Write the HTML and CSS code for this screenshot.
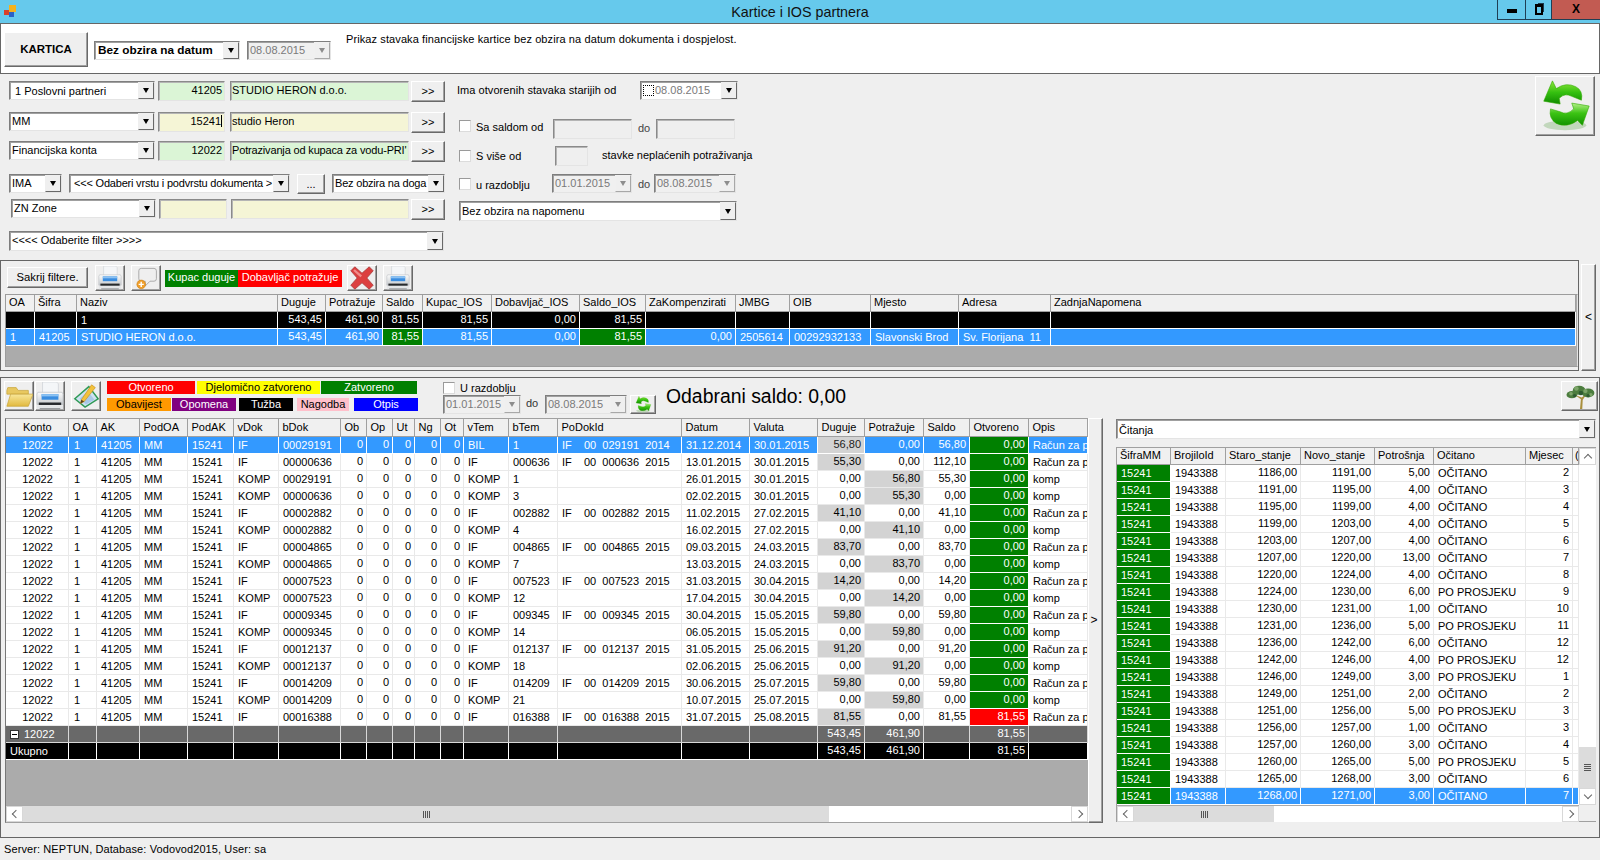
FILE: index.html
```html
<!DOCTYPE html>
<html lang="hr">
<head>
<meta charset="utf-8">
<title>Kartice i IOS partnera</title>
<link rel="stylesheet" href="styles.css">
</head>
<body>
<svg class="defs" aria-hidden="true">
  <defs>
    <linearGradient id="grn" x1="0" y1="0" x2="0" y2="1"><stop offset="0" stop-color="#8fe63a"/><stop offset="0.5" stop-color="#35c010"/><stop offset="1" stop-color="#0f8a00"/></linearGradient>
    <linearGradient id="grn2" x1="0" y1="0" x2="0" y2="1"><stop offset="0" stop-color="#b5f08a"/><stop offset="0.45" stop-color="#3cc414"/><stop offset="1" stop-color="#129200"/></linearGradient>
    <linearGradient id="pbody" x1="0" y1="0" x2="0" y2="1"><stop offset="0" stop-color="#fbfbfb"/><stop offset="1" stop-color="#c8ccd0"/></linearGradient>
    <linearGradient id="fold" x1="0" y1="0" x2="0" y2="1"><stop offset="0" stop-color="#f8e79a"/><stop offset="1" stop-color="#e2b93e"/></linearGradient>
    <symbol id="i-print" viewBox="0 0 30 30">
      <path d="M7 0h15l2 2v11H7z" fill="#f4f6f8" stroke="#c9ced3" stroke-width=".7"/>
      <path d="M2 11h26l1 2v11H1V13z" fill="url(#pbody)" stroke="#b9bdc2" stroke-width=".7"/>
      <rect x="6" y="13" width="18" height="6" fill="#3a8de0"/>
      <rect x="6" y="13" width="18" height="2.4" fill="#8cc2f2"/>
      <rect x="3" y="22" width="24" height="2.6" fill="#26292c"/>
      <rect x="1" y="25" width="28" height="4" fill="#e4e6e8"/>
      <rect x="4" y="28" width="22" height="1.2" fill="#8d9094"/>
    </symbol>
    <symbol id="i-refresh" viewBox="0 0 60 60">
      <ellipse cx="30" cy="50" rx="22" ry="5" fill="#a9c9a0" opacity=".65"/>
      <path d="M17 4 8 25 25 28 24 22Q30 16 37 20L47 24Q49 14 41 10 31 5 21 12Z" fill="url(#grn)" stroke="#2fa800" stroke-width=".6"/>
      <path d="M48 50 55 30 37 27 39 33Q32 40 25 36L15 33Q13 43 21 48 32 53 43 45Z" fill="url(#grn2)" stroke="#2fa800" stroke-width=".6"/>
    </symbol>
  </defs>
</svg>

<header class="titlebar">
  <div class="title-left">
    <svg class="appicon" viewBox="0 0 12 12"><rect x="0" y="5" width="5" height="5" fill="#d8402a"/><rect x="5" y="0" width="7" height="7" fill="#f5b21c"/><rect x="5" y="7" width="5" height="5" fill="#2a62c8"/></svg>
  </div>
  <div class="title-text">Kartice i IOS partnera</div>
  <div class="winbtns">
    <div class="winbtn w-min"><span class="min-glyph"></span></div>
    <div class="winbtn w-res"><span class="res-glyph"></span></div>
    <div class="winbtn w-close">X</div>
  </div>
</header>

<section class="toppanel">
  <button class="btn3d kartica">KARTICA</button>
  <div class="combo bold cb-mode"><span class="ctext">Bez obzira na datum</span><span class="arr"></span></div>
  <div class="combo dis cb-date0"><span class="ctext">08.08.2015</span><span class="arr"></span></div>
  <div class="topnote">Prikaz stavaka financijske kartice bez obzira na datum dokumenta i dospjelost.</div>
</section>

<section class="filters">
  <div class="fleft">
    <div class="frow">
      <div class="combo w-a"><span class="ctext ind1">1 Poslovni partneri</span><span class="arr"></span></div>
      <div class="inp green w-code n-in">41205</div>
      <div class="inp green w-name">STUDIO HERON d.o.o.</div>
      <button class="btn3d w-go">&gt;&gt;</button>
    </div>
    <div class="frow">
      <div class="combo w-a"><span class="ctext">MM</span><span class="arr"></span></div>
      <div class="inp yellow w-code n-in"><span class="caret">15241</span></div>
      <div class="inp yellow w-name">studio Heron</div>
      <button class="btn3d w-go">&gt;&gt;</button>
    </div>
    <div class="frow">
      <div class="combo w-a"><span class="ctext">Financijska konta</span><span class="arr"></span></div>
      <div class="inp green w-code n-in">12022</div>
      <div class="inp green w-name tight">Potrazivanja od kupaca za vodu-PRI'</div>
      <button class="btn3d w-go">&gt;&gt;</button>
    </div>
    <div class="frow row4">
      <div class="combo w-ima"><span class="ctext">IMA</span><span class="arr"></span></div>
      <div class="combo w-vrsta"><span class="ctext ind tight2">&lt;&lt;&lt; Odaberi vrstu i podvrstu dokumenta &gt;</span><span class="arr"></span></div>
      <button class="btn3d w-dots">...</button>
      <div class="combo w-doga"><span class="ctext tight2">Bez obzira na doga</span><span class="arr"></span></div>
    </div>
    <div class="frow row5">
      <div class="combo w-zn"><span class="ctext">ZN Zone</span><span class="arr"></span></div>
      <div class="inp yellow w-code2"></div>
      <div class="inp yellow w-name2"></div>
      <button class="btn3d w-go">&gt;&gt;</button>
    </div>
    <div class="frow">
      <div class="combo w-filter"><span class="ctext ind0">&lt;&lt;&lt;&lt; Odaberite filter &gt;&gt;&gt;&gt;</span><span class="arr"></span></div>
    </div>
  </div>
  <div class="fright">
    <div class="rrow r-ima">
      <span class="lab-ima">Ima otvorenih stavaka starijih od</span>
      <div class="combo date-cb"><span class="focuscb"></span><span class="ctext grey">08.08.2015</span><span class="arr"></span></div>
    </div>
    <div class="rrow r-saldo">
      <span class="chk"></span><span class="lab-c">Sa saldom od</span>
      <div class="inp off w-sal"></div><span class="lab-do">do</span><div class="inp off w-sal2"></div>
    </div>
    <div class="rrow r-vise">
      <span class="chk"></span><span class="lab-c lab-c2">S više od</span>
      <div class="inp off w-vise"></div><span class="lab-stavke">stavke neplaćenih potraživanja</span>
    </div>
    <div class="rrow r-razd">
      <span class="chk"></span><span class="lab-c lab-c3">u razdoblju</span>
      <div class="combo dis w-d1"><span class="ctext">01.01.2015</span><span class="arr"></span></div><span class="lab-do2">do</span>
      <div class="combo dis w-d2"><span class="ctext">08.08.2015</span><span class="arr"></span></div>
    </div>
    <div class="rrow r-nap">
      <div class="combo w-nap"><span class="ctext t3">Bez obzira na napomenu</span><span class="arr"></span></div>
    </div>
  </div>
  <button class="btn3d big-refresh"><svg class="ic-big" viewBox="0 0 60 60"><use href="#i-refresh"/></svg></button>
</section>

<section class="mid">
  <div class="panel2">
    <div class="toolbar2">
      <button class="btn3d sakrij">Sakrij filtere.</button>
      <button class="btn3d ib ib-a"><svg class="ic" viewBox="0 0 30 30"><use href="#i-print"/></svg></button>
      <button class="btn3d ib ib-b"><svg class="ic" viewBox="0 0 30 30"><path d="M9 3h16a3 3 0 0 1 3 3v10a3 3 0 0 1-3 3h-5l-6 6v-6H9a3 3 0 0 1-3-3V6a3 3 0 0 1 3-3z" fill="#efefef" stroke="#a8a8a8" stroke-width="1.2"/><circle cx="9" cy="23" r="5.4" fill="#f0a02c" stroke="#c97c12" stroke-width=".7"/><path d="M9 19.8v6.4M5.8 23h6.4" stroke="#fff" stroke-width="1.8"/></svg></button>
      <div class="leg2 l-green">Kupac duguje</div>
      <div class="leg2 l-red">Dobavljač potražuje</div>
      <button class="btn3d ib ib-x"><svg class="ic" viewBox="0 0 30 30"><path d="M1 6l5-5 9 8 9-8 5 5-8 9 8 9-5 5-9-8-9 8-5-5 8-9z" fill="#dc3f3f" stroke="#a93a3a" stroke-width="1"/><path d="M4 6l2-2 9 8-2 2z" fill="#f08c8a"/></svg></button>
      <button class="btn3d ib ib-p2"><svg class="ic" viewBox="0 0 30 30"><use href="#i-print"/></svg></button>
    </div>
    <div class="grid-top">
      <table class="dg dg-top">
        <thead><tr><th>OA</th><th>Šifra</th><th>Naziv</th><th>Duguje</th><th>Potražuje</th><th>Saldo</th><th>Kupac_IOS</th><th>Dobavljač_IOS</th><th>Saldo_IOS</th><th>ZaKompenzirati</th><th>JMBG</th><th>OIB</th><th>Mjesto</th><th>Adresa</th><th>ZadnjaNapomena</th></tr></thead>
        <tbody>
          <tr class="tot"><td></td><td></td><td>1</td><td class="n">543,45</td><td class="n">461,90</td><td class="n">81,55</td><td class="n">81,55</td><td class="n">0,00</td><td class="n">81,55</td><td></td><td></td><td></td><td></td><td></td><td></td></tr>
          <tr class="sel"><td>1</td><td>41205</td><td>STUDIO HERON d.o.o.</td><td class="n">543,45</td><td class="n">461,90</td><td class="n ok">81,55</td><td class="n">81,55</td><td class="n">0,00</td><td class="n ok">81,55</td><td class="n">0,00</td><td>2505614</td><td>00292932133</td><td>Slavonski Brod</td><td class="pre">Sv. Florijana  11</td><td></td></tr>
        </tbody>
      </table>
    </div>
  </div>
  <button class="btn3d side-left">&lt;</button>
</section>

<section class="panel3">
  <div class="toolbar3">
    <button class="btn3d ib3 ib3-a"><svg class="ic3" viewBox="0 0 30 30"><path d="M2 9l1-3h9l2 3h11v4H2z" fill="#e8c860" stroke="#c9a63c" stroke-width=".8"/><path d="M6 13h24l-5 13H2z" fill="url(#fold)" stroke="#c9a63c" stroke-width=".8"/></svg></button>
    <button class="btn3d ib3 ib3-b"><svg class="ic3" viewBox="0 0 30 30"><use href="#i-print"/></svg></button>
    <button class="btn3d ib3 ib3-c"><svg class="ic3" viewBox="0 0 30 30"><path d="M3 18 18 5l10 13-14 9z" fill="#cfe2f2" stroke="#2f9a56" stroke-width="1.6"/><path d="M8 18l9-8 7 9-9 5z" fill="#a9c8e8"/><path d="M10 19 21 3l4 3-12 15-4 2z" fill="#f2c23c" stroke="#c98f1a" stroke-width=".7"/><path d="M9 23l1-4 3 2z" fill="#5a3d1a"/></svg></button>
    <div class="legends">
      <div class="legrow">
        <div class="leg lg-red w-l1">Otvoreno</div><div class="leg lg-yel w-l2">Djelomično zatvoreno</div><div class="leg lg-grn w-l3">Zatvoreno</div>
      </div>
      <div class="legrow legrow2">
        <div class="leg lg-org w-l4">Obavijest</div><div class="leg lg-pur w-l5">Opomena</div><div class="leg lg-blk w-l6">Tužba</div><div class="leg lg-pnk w-l7">Nagodba</div><div class="leg lg-blu w-l8">Otpis</div>
      </div>
    </div>
    <div class="razd">
      <div class="razd-top"><span class="chk"></span><span class="razd-lab">U razdoblju</span></div>
      <div class="razd-bot">
        <div class="combo dis w-r1"><span class="ctext">01.01.2015</span><span class="arr"></span></div><span class="razd-do">do</span>
        <div class="combo dis w-r2"><span class="ctext">08.08.2015</span><span class="arr"></span></div>
        <button class="btn3d ref-small"><svg class="ic-small" viewBox="0 0 60 60"><use href="#i-refresh"/></svg></button>
      </div>
    </div>
    <div class="saldo">Odabrani saldo: 0,00</div>
    <button class="btn3d tree"><svg class="ic-tree" viewBox="0 0 36 30"><path d="M18 29l1-11-7-5 8 3 6-5-5 8-.5 10z" fill="#a98f3c"/><g fill="#4c7d3e"><ellipse cx="9" cy="13" rx="6" ry="4"/><ellipse cx="17" cy="8" rx="7" ry="5"/><ellipse cx="27" cy="11" rx="7" ry="5"/></g><g fill="#7da56a"><circle cx="14" cy="6" r="2.5"/><circle cx="24" cy="9" r="2.4"/><circle cx="8" cy="12" r="2"/><circle cx="30" cy="13" r="2"/></g><g fill="#2e5a30"><circle cx="19" cy="11" r="2.5"/><circle cx="12" cy="14" r="1.8"/><circle cx="27" cy="14" r="1.8"/></g></svg></button>
  </div>

  <div class="content3">
    <div class="grid-main">
      <div class="gm-body">
        <table class="dg dg-main">
          <thead><tr><th class="c">Konto</th><th>OA</th><th>AK</th><th>PodOA</th><th>PodAK</th><th>vDok</th><th>bDok</th><th>Ob</th><th>Op</th><th>Ut</th><th>Ng</th><th>Ot</th><th>vTem</th><th>bTem</th><th>PoDokId</th><th>Datum</th><th>Valuta</th><th>Duguje</th><th>Potražuje</th><th>Saldo</th><th>Otvoreno</th><th>Opis</th></tr></thead>
          <tbody>
            <tr class="sel"><td class="c">12022</td><td class="oa">1</td><td>41205</td><td>MM</td><td>15241</td><td>IF</td><td>00029191</td><td class="n">0</td><td class="n">0</td><td class="n">0</td><td class="n">0</td><td class="n">0</td><td>BIL</td><td>1</td><td class="pre">IF    00  029191  2014</td><td>31.12.2014</td><td>30.01.2015</td><td class="n g">56,80</td><td class="n">0,00</td><td class="n">56,80</td><td class="n ok">0,00</td><td>Račun za p</td></tr>
            <tr><td class="c">12022</td><td class="oa">1</td><td>41205</td><td>MM</td><td>15241</td><td>IF</td><td>00000636</td><td class="n">0</td><td class="n">0</td><td class="n">0</td><td class="n">0</td><td class="n">0</td><td>IF</td><td>000636</td><td class="pre">IF    00  000636  2015</td><td>13.01.2015</td><td>30.01.2015</td><td class="n g">55,30</td><td class="n">0,00</td><td class="n">112,10</td><td class="n ok">0,00</td><td>Račun za p</td></tr>
            <tr><td class="c">12022</td><td class="oa">1</td><td>41205</td><td>MM</td><td>15241</td><td>KOMP</td><td>00029191</td><td class="n">0</td><td class="n">0</td><td class="n">0</td><td class="n">0</td><td class="n">0</td><td>KOMP</td><td>1</td><td></td><td>26.01.2015</td><td>30.01.2015</td><td class="n">0,00</td><td class="n g">56,80</td><td class="n">55,30</td><td class="n ok">0,00</td><td>komp</td></tr>
            <tr><td class="c">12022</td><td class="oa">1</td><td>41205</td><td>MM</td><td>15241</td><td>KOMP</td><td>00000636</td><td class="n">0</td><td class="n">0</td><td class="n">0</td><td class="n">0</td><td class="n">0</td><td>KOMP</td><td>3</td><td></td><td>02.02.2015</td><td>30.01.2015</td><td class="n">0,00</td><td class="n g">55,30</td><td class="n">0,00</td><td class="n ok">0,00</td><td>komp</td></tr>
            <tr><td class="c">12022</td><td class="oa">1</td><td>41205</td><td>MM</td><td>15241</td><td>IF</td><td>00002882</td><td class="n">0</td><td class="n">0</td><td class="n">0</td><td class="n">0</td><td class="n">0</td><td>IF</td><td>002882</td><td class="pre">IF    00  002882  2015</td><td>11.02.2015</td><td>27.02.2015</td><td class="n g">41,10</td><td class="n">0,00</td><td class="n">41,10</td><td class="n ok">0,00</td><td>Račun za p</td></tr>
            <tr><td class="c">12022</td><td class="oa">1</td><td>41205</td><td>MM</td><td>15241</td><td>KOMP</td><td>00002882</td><td class="n">0</td><td class="n">0</td><td class="n">0</td><td class="n">0</td><td class="n">0</td><td>KOMP</td><td>4</td><td></td><td>16.02.2015</td><td>27.02.2015</td><td class="n">0,00</td><td class="n g">41,10</td><td class="n">0,00</td><td class="n ok">0,00</td><td>komp</td></tr>
            <tr><td class="c">12022</td><td class="oa">1</td><td>41205</td><td>MM</td><td>15241</td><td>IF</td><td>00004865</td><td class="n">0</td><td class="n">0</td><td class="n">0</td><td class="n">0</td><td class="n">0</td><td>IF</td><td>004865</td><td class="pre">IF    00  004865  2015</td><td>09.03.2015</td><td>24.03.2015</td><td class="n g">83,70</td><td class="n">0,00</td><td class="n">83,70</td><td class="n ok">0,00</td><td>Račun za p</td></tr>
            <tr><td class="c">12022</td><td class="oa">1</td><td>41205</td><td>MM</td><td>15241</td><td>KOMP</td><td>00004865</td><td class="n">0</td><td class="n">0</td><td class="n">0</td><td class="n">0</td><td class="n">0</td><td>KOMP</td><td>7</td><td></td><td>13.03.2015</td><td>24.03.2015</td><td class="n">0,00</td><td class="n g">83,70</td><td class="n">0,00</td><td class="n ok">0,00</td><td>komp</td></tr>
            <tr><td class="c">12022</td><td class="oa">1</td><td>41205</td><td>MM</td><td>15241</td><td>IF</td><td>00007523</td><td class="n">0</td><td class="n">0</td><td class="n">0</td><td class="n">0</td><td class="n">0</td><td>IF</td><td>007523</td><td class="pre">IF    00  007523  2015</td><td>31.03.2015</td><td>30.04.2015</td><td class="n g">14,20</td><td class="n">0,00</td><td class="n">14,20</td><td class="n ok">0,00</td><td>Račun za p</td></tr>
            <tr><td class="c">12022</td><td class="oa">1</td><td>41205</td><td>MM</td><td>15241</td><td>KOMP</td><td>00007523</td><td class="n">0</td><td class="n">0</td><td class="n">0</td><td class="n">0</td><td class="n">0</td><td>KOMP</td><td>12</td><td></td><td>17.04.2015</td><td>30.04.2015</td><td class="n">0,00</td><td class="n g">14,20</td><td class="n">0,00</td><td class="n ok">0,00</td><td>komp</td></tr>
            <tr><td class="c">12022</td><td class="oa">1</td><td>41205</td><td>MM</td><td>15241</td><td>IF</td><td>00009345</td><td class="n">0</td><td class="n">0</td><td class="n">0</td><td class="n">0</td><td class="n">0</td><td>IF</td><td>009345</td><td class="pre">IF    00  009345  2015</td><td>30.04.2015</td><td>15.05.2015</td><td class="n g">59,80</td><td class="n">0,00</td><td class="n">59,80</td><td class="n ok">0,00</td><td>Račun za p</td></tr>
            <tr><td class="c">12022</td><td class="oa">1</td><td>41205</td><td>MM</td><td>15241</td><td>KOMP</td><td>00009345</td><td class="n">0</td><td class="n">0</td><td class="n">0</td><td class="n">0</td><td class="n">0</td><td>KOMP</td><td>14</td><td></td><td>06.05.2015</td><td>15.05.2015</td><td class="n">0,00</td><td class="n g">59,80</td><td class="n">0,00</td><td class="n ok">0,00</td><td>komp</td></tr>
            <tr><td class="c">12022</td><td class="oa">1</td><td>41205</td><td>MM</td><td>15241</td><td>IF</td><td>00012137</td><td class="n">0</td><td class="n">0</td><td class="n">0</td><td class="n">0</td><td class="n">0</td><td>IF</td><td>012137</td><td class="pre">IF    00  012137  2015</td><td>31.05.2015</td><td>25.06.2015</td><td class="n g">91,20</td><td class="n">0,00</td><td class="n">91,20</td><td class="n ok">0,00</td><td>Račun za p</td></tr>
            <tr><td class="c">12022</td><td class="oa">1</td><td>41205</td><td>MM</td><td>15241</td><td>KOMP</td><td>00012137</td><td class="n">0</td><td class="n">0</td><td class="n">0</td><td class="n">0</td><td class="n">0</td><td>KOMP</td><td>18</td><td></td><td>02.06.2015</td><td>25.06.2015</td><td class="n">0,00</td><td class="n g">91,20</td><td class="n">0,00</td><td class="n ok">0,00</td><td>komp</td></tr>
            <tr><td class="c">12022</td><td class="oa">1</td><td>41205</td><td>MM</td><td>15241</td><td>IF</td><td>00014209</td><td class="n">0</td><td class="n">0</td><td class="n">0</td><td class="n">0</td><td class="n">0</td><td>IF</td><td>014209</td><td class="pre">IF    00  014209  2015</td><td>30.06.2015</td><td>25.07.2015</td><td class="n g">59,80</td><td class="n">0,00</td><td class="n">59,80</td><td class="n ok">0,00</td><td>Račun za p</td></tr>
            <tr><td class="c">12022</td><td class="oa">1</td><td>41205</td><td>MM</td><td>15241</td><td>KOMP</td><td>00014209</td><td class="n">0</td><td class="n">0</td><td class="n">0</td><td class="n">0</td><td class="n">0</td><td>KOMP</td><td>21</td><td></td><td>10.07.2015</td><td>25.07.2015</td><td class="n">0,00</td><td class="n g">59,80</td><td class="n">0,00</td><td class="n ok">0,00</td><td>komp</td></tr>
            <tr><td class="c">12022</td><td class="oa">1</td><td>41205</td><td>MM</td><td>15241</td><td>IF</td><td>00016388</td><td class="n">0</td><td class="n">0</td><td class="n">0</td><td class="n">0</td><td class="n">0</td><td>IF</td><td>016388</td><td class="pre">IF    00  016388  2015</td><td>31.07.2015</td><td>25.08.2015</td><td class="n g">81,55</td><td class="n">0,00</td><td class="n">81,55</td><td class="n bad">81,55</td><td>Račun za p</td></tr>
            <tr class="sum"><td><span class="minus"></span><span class="sumlab">12022</span></td><td></td><td></td><td></td><td></td><td></td><td></td><td></td><td></td><td></td><td></td><td></td><td></td><td></td><td></td><td></td><td></td><td class="n">543,45</td><td class="n">461,90</td><td></td><td class="n">81,55</td><td></td></tr>
            <tr class="tot"><td>Ukupno</td><td></td><td></td><td></td><td></td><td></td><td></td><td></td><td></td><td></td><td></td><td></td><td></td><td></td><td></td><td></td><td></td><td class="n">543,45</td><td class="n">461,90</td><td></td><td class="n">81,55</td><td></td></tr>
          </tbody>
        </table>
      </div>
      <div class="hscroll">
        <span class="sb-btn"><span class="chev-l"></span></span>
        <span class="sb-thumb th-main"><span class="grip"></span></span>
        <span class="sb-track"></span>
        <span class="sb-btn"><span class="chev-r"></span></span>
      </div>
    </div>
    <button class="btn3d splitter">&gt;</button>
    <div class="rightpanel">
      <div class="combo w-cit"><span class="ctext t4">Čitanja</span><span class="arr"></span></div>
      <div class="grid-right">
        <div class="gr-main">
          <table class="dg dg-right">
            <thead><tr><th>ŠifraMM</th><th>BrojiloId</th><th>Staro_stanje</th><th>Novo_stanje</th><th>Potrošnja</th><th>Očitano</th><th>Mjesec</th><th>(</th></tr></thead>
            <tbody>
              <tr><td class="ok">15241</td><td>1943388</td><td class="n">1186,00</td><td class="n">1191,00</td><td class="n">5,00</td><td>OČITANO</td><td class="n">2</td><td></td></tr>
              <tr><td class="ok">15241</td><td>1943388</td><td class="n">1191,00</td><td class="n">1195,00</td><td class="n">4,00</td><td>OČITANO</td><td class="n">3</td><td></td></tr>
              <tr><td class="ok">15241</td><td>1943388</td><td class="n">1195,00</td><td class="n">1199,00</td><td class="n">4,00</td><td>OČITANO</td><td class="n">4</td><td></td></tr>
              <tr><td class="ok">15241</td><td>1943388</td><td class="n">1199,00</td><td class="n">1203,00</td><td class="n">4,00</td><td>OČITANO</td><td class="n">5</td><td></td></tr>
              <tr><td class="ok">15241</td><td>1943388</td><td class="n">1203,00</td><td class="n">1207,00</td><td class="n">4,00</td><td>OČITANO</td><td class="n">6</td><td></td></tr>
              <tr><td class="ok">15241</td><td>1943388</td><td class="n">1207,00</td><td class="n">1220,00</td><td class="n">13,00</td><td>OČITANO</td><td class="n">7</td><td></td></tr>
              <tr><td class="ok">15241</td><td>1943388</td><td class="n">1220,00</td><td class="n">1224,00</td><td class="n">4,00</td><td>OČITANO</td><td class="n">8</td><td></td></tr>
              <tr><td class="ok">15241</td><td>1943388</td><td class="n">1224,00</td><td class="n">1230,00</td><td class="n">6,00</td><td>PO PROSJEKU</td><td class="n">9</td><td></td></tr>
              <tr><td class="ok">15241</td><td>1943388</td><td class="n">1230,00</td><td class="n">1231,00</td><td class="n">1,00</td><td>OČITANO</td><td class="n">10</td><td></td></tr>
              <tr><td class="ok">15241</td><td>1943388</td><td class="n">1231,00</td><td class="n">1236,00</td><td class="n">5,00</td><td>PO PROSJEKU</td><td class="n">11</td><td></td></tr>
              <tr><td class="ok">15241</td><td>1943388</td><td class="n">1236,00</td><td class="n">1242,00</td><td class="n">6,00</td><td>OČITANO</td><td class="n">12</td><td></td></tr>
              <tr><td class="ok">15241</td><td>1943388</td><td class="n">1242,00</td><td class="n">1246,00</td><td class="n">4,00</td><td>PO PROSJEKU</td><td class="n">12</td><td></td></tr>
              <tr><td class="ok">15241</td><td>1943388</td><td class="n">1246,00</td><td class="n">1249,00</td><td class="n">3,00</td><td>PO PROSJEKU</td><td class="n">1</td><td></td></tr>
              <tr><td class="ok">15241</td><td>1943388</td><td class="n">1249,00</td><td class="n">1251,00</td><td class="n">2,00</td><td>OČITANO</td><td class="n">2</td><td></td></tr>
              <tr><td class="ok">15241</td><td>1943388</td><td class="n">1251,00</td><td class="n">1256,00</td><td class="n">5,00</td><td>PO PROSJEKU</td><td class="n">3</td><td></td></tr>
              <tr><td class="ok">15241</td><td>1943388</td><td class="n">1256,00</td><td class="n">1257,00</td><td class="n">1,00</td><td>OČITANO</td><td class="n">3</td><td></td></tr>
              <tr><td class="ok">15241</td><td>1943388</td><td class="n">1257,00</td><td class="n">1260,00</td><td class="n">3,00</td><td>OČITANO</td><td class="n">4</td><td></td></tr>
              <tr><td class="ok">15241</td><td>1943388</td><td class="n">1260,00</td><td class="n">1265,00</td><td class="n">5,00</td><td>PO PROSJEKU</td><td class="n">5</td><td></td></tr>
              <tr><td class="ok">15241</td><td>1943388</td><td class="n">1265,00</td><td class="n">1268,00</td><td class="n">3,00</td><td>OČITANO</td><td class="n">6</td><td></td></tr>
              <tr class="sel"><td class="ok">15241</td><td>1943388</td><td class="n">1268,00</td><td class="n">1271,00</td><td class="n">3,00</td><td>OČITANO</td><td class="n">7</td><td></td></tr>
            </tbody>
          </table>
          <div class="hscroll hs-right">
            <span class="sb-btn"><span class="chev-l"></span></span>
            <span class="sb-thumb th-right"><span class="grip"></span></span>
            <span class="sb-track"></span>
            <span class="sb-btn"><span class="chev-r"></span></span>
          </div>
        </div>
        <div class="vscroll">
          <span class="vs-btn vs-up"><span class="chev-u"></span></span>
          <span class="vs-track"></span>
          <span class="vs-thumb"><span class="vgrip"></span></span>
          <span class="vs-btn vs-down"><span class="chev-d"></span></span>
        </div>
      </div>
    </div>
  </div>
</section>

<footer class="status">Server: NEPTUN, Database: Vodovod2015, User: sa</footer>
</body>
</html>
```
FILE: styles.css
```css
* { box-sizing: border-box; }
html, body { margin: 0; padding: 0; }
body {
  width: 1600px; height: 860px; overflow: hidden;
  background: #efefef; color: #000;
  font: 11px/13px "Liberation Sans", Arial, sans-serif;
}
button { font: inherit; color: inherit; padding: 0; margin: 0; cursor: default; }
.defs { display: block; width: 0; height: 0; overflow: hidden; }

/* Title bar */
.titlebar { height: 23px; background: #66c9ec; display: grid; grid-template-columns: 1fr auto 1fr; }
.title-left { display: flex; padding: 5px 0 0 4px; }
.appicon { width: 12px; height: 12px; }
.title-text { font: 14.3px/24px "Liberation Sans", Arial, sans-serif; color: #111; }
.winbtns { display: flex; justify-content: flex-end; height: 20px; }
.winbtn { display: flex; align-items: center; justify-content: center; height: 20px; border-bottom: 1px solid #1f3f55; border-left: 1px solid #1f3f55; }
.w-min { width: 28px; }
.w-res { width: 26px; }
.w-close { width: 49px; background: #c25b52; font-weight: bold; font-size: 12px; }
.min-glyph { display: block; width: 10px; height: 4px; background: #000; margin-top: 3px; }
.res-glyph { display: block; width: 8px; height: 11px; border: 2px solid #000; border-top-width: 3px; box-shadow: 2px -2px 0 -1px #1b3a4d; }

/* 3D controls */
.btn3d {
  background: #efefef;
  border: 1px solid; border-color: #fff #696969 #696969 #fff;
  box-shadow: inset -1px -1px 0 #a0a0a0;
  display: flex; align-items: center; justify-content: center;
  flex: none;
}
.combo {
  display: flex; align-items: stretch; height: 19px; flex: none;
  background: #fff;
  border: 1px solid; border-color: #7e7e7e #e4e4e4 #e4e4e4 #7e7e7e;
  box-shadow: inset 1px 1px 0 #a0a0a0;
}
.ctext { flex: 1; min-width: 0; padding: 2px 0 0 2px; white-space: nowrap; overflow: hidden; }
.ctext.ind { padding-left: 4px; }
.ctext.ind1 { padding: 3px 0 0 5px; }
.ctext.ind0 { padding-left: 2px; }
.ctext.t3 { padding-top: 3px; }
.ctext.t4 { padding-top: 4px; }
.tight { letter-spacing: -0.16px; }
.tight2 { letter-spacing: -0.2px; }
.arr {
  flex: none; width: 16px; background: #efefef;
  border: 1px solid; border-color: #efefef #696969 #696969 #efefef;
  display: flex; align-items: center; justify-content: center;
}
.arr::after { content: ""; border: 3.5px solid transparent; border-top: 5px solid #000; border-bottom: 0; }
.combo.bold .ctext { font-weight: bold; font-size: 11.8px; padding-left: 3px; }
.combo.dis { background: #f0f0f0; }
.combo.dis .ctext, .ctext.grey { color: #7a7a7a; }
.combo.dis .arr { border-color: #f0f0f0 #a8a8a8 #a8a8a8 #f0f0f0; }
.combo.dis .arr::after { border-top-color: #8d8d8d; }
.inp {
  height: 20px; flex: none; padding: 2px 1px 0 1px; white-space: nowrap; overflow: hidden;
  border: 1px solid; border-color: #8a8a8a #e4e4e4 #e4e4e4 #8a8a8a;
  box-shadow: inset 1px 1px 0 #b5b5b5;
}
.green { background: #dbf5d6; }
.yellow { background: #f5f5d6; }
.off { background: #efefef; }
.n-in { text-align: right; padding-right: 2px; }
.caret { border-right: 1px solid #000; }
.chk { display: block; width: 12px; height: 12px; flex: none; background: #fff; border: 1px solid; border-color: #9a9a9a #dcdcdc #dcdcdc #9a9a9a; }

/* Top panel */
.toppanel { height: 51px; background: #fff; border: 1px solid #666; display: flex; align-items: flex-start; padding-left: 3px; }
.kartica { width: 84px; height: 35px; margin-top: 8px; font-weight: bold; font-size: 11.5px; }
.cb-mode { width: 146px; margin: 17px 0 0 6px; }
.cb-date0 { width: 84px; margin: 17px 0 0 7px; }
.topnote { margin: 9px 0 0 15px; letter-spacing: .1px; white-space: nowrap; }

/* Filter area */
.filters { height: 186px; display: flex; align-items: flex-start; padding: 0 5px 0 9px; }
.fleft { width: 436px; margin-top: 7px; display: grid; grid-template-rows: 31px 29px 33px 25px 32px 19px; }
.frow { display: flex; align-items: flex-start; }
.w-a { width: 146px; }
.frow .inp { margin-left: 3px; }
.w-code { width: 67px; }
.frow .w-name { width: 179px; margin-left: 5px; }
.w-go { width: 34px; height: 21px; margin-left: 2px; }
.row4 .combo, .row4 .btn3d { margin-right: 7px; }
.w-ima { width: 53px; }
.w-vrsta { width: 221px; }
.w-dots { width: 28px; height: 20px; margin-right: 7px; }
.row4 .w-doga { width: 113px; margin-right: 0; }
.row5 { padding-left: 2px; }
.w-zn { width: 145px; }
.w-code2 { width: 68px; }
.frow .w-name2 { width: 178px; margin-left: 4px; }
.w-filter { width: 435px; height: 20px; }

.fright { width: 300px; margin: 7px 0 0 12px; display: grid; grid-template-rows: 38px 27px 28px 27px 20px; }
.rrow { display: flex; align-items: flex-start; }
.lab-ima { width: 183px; padding-top: 3px; letter-spacing: .05px; white-space: nowrap; }
.date-cb { width: 98px; }
.focuscb { display: block; width: 11px; height: 11px; margin: 3px 0 0 2px; border: 1px dotted #000; background: #fff; flex: none; }
.date-cb .ctext { padding-left: 1px; }
.r-saldo, .r-vise, .r-razd { padding-left: 2px; }
.r-saldo .chk { margin-top: 1px; }
.lab-c { width: 77px; margin-left: 5px; padding-top: 2px; white-space: nowrap; }
.w-sal { width: 79px; }
.lab-do { width: 24px; padding: 3px 0 0 6px; color: #444; }
.w-sal2 { width: 79px; }
.r-vise .chk { margin-top: 4px; }
.lab-c2 { padding-top: 4px; width: 79px; }
.w-vise { width: 33px; }
.lab-stavke { margin-left: 14px; padding-top: 3px; white-space: nowrap; }
.r-razd .chk { margin-top: 4px; }
.lab-c3 { width: 76px; padding-top: 5px; }
.w-d1 { width: 80px; }
.lab-do2 { width: 22px; padding: 4px 0 0 6px; color: #444; }
.w-d2 { width: 82px; }
.w-nap { width: 278px; height: 20px; margin-left: 2px; }
.big-refresh { width: 60px; height: 60px; margin: 2px 0 0 auto; }
.ic-big { width: 60px; height: 60px; display: block; }

/* Middle panel */
.mid { display: flex; height: 111px; }
.panel2 { width: 1579px; border: 1px solid #666; padding-left: 4px; display: flex; flex-direction: column; flex: none; }
.toolbar2 { height: 33px; display: flex; align-items: flex-start; }
.sakrij { width: 81px; height: 21px; margin: 6px 0 0 2px; font-size: 11.3px; }
.ib { width: 30px; height: 26px; margin-top: 4px; }
.ib-a { margin-left: 7px; }
.ib-b { margin-left: 6px; }
.ic { width: 28px; height: 24px; display: block; }
.leg2 { height: 17px; margin-top: 9px; color: #fff; text-align: center; line-height: 15px; flex: none; }
.l-green { width: 73px; background: #008000; margin-left: 4px; }
.l-red { width: 104px; background: #ff0000; }
.ib-x { margin-left: 5px; }
.ib-p2 { margin-left: 6px; }
.side-left { width: 15px; height: 107px; margin: 4px 0 0 2px; font-size: 12px; }

/* Data grids */
.grid-top { width: 1573px; height: 73px; background: #ababab; border: 1px solid #9c9c9c; border-right-color: #e4e4e4; overflow: hidden; }
.dg { table-layout: fixed; border-collapse: separate; border-spacing: 0; }
.dg th, .dg td {
  height: 17px; padding: 0 3px 0 4px; line-height: 13px;
  font-weight: normal; text-align: left; white-space: nowrap; overflow: hidden;
  border-right: 1px solid #e9e9e9; border-bottom: 1px solid #e9e9e9;
  background: #fff;
}
.dg th { background: #f0f0f0; border-right-color: #a0a0a0; border-bottom-color: #a0a0a0; padding-left: 3px; padding-bottom: 1px; }
.dg-main th { padding-left: 3.5px; }
.dg td.n { text-align: right; padding-left: 0; padding-bottom: 2px; }
.dg .c { text-align: center; }
.dg td.oa { padding-left: 5px; }
.dg td.pre { white-space: pre; }
.dg td.g { background: #d3d3d3; }
.dg td.ok { background: #008000; color: #fff; border-right-color: #fff; border-bottom-color: #fff; }
.dg td.bad { background: #ff0000; color: #fff; border-right-color: #fff; border-bottom-color: #fff; }
.dg tr.sel td { background: #3399ff; color: #fff; border-right-color: #fff; border-bottom-color: #fff; }
.dg tr.sel td.ok { background: #008000; }
.dg tr.sel td.g { background: #d3d3d3; color: #222; }
.dg tr.tot td { background: #000; color: #fff; border-right-color: #fff; border-bottom-color: #fff; }
.dg tr.sum td { background: #696969; color: #fff; border-right-color: #d8d8d8; border-bottom-color: #d8d8d8; }
.sumlab { margin-left: 5px; }
.minus { display: inline-block; width: 9px; height: 9px; background: #fff; border: 1px solid #333; vertical-align: -1px; box-shadow: inset 0 0 0 1px #fff, inset 0 -3px 0 #fff, inset 0 3px 0 #fff, inset 0 0 0 9px #000; }

.dg-top { width: 1570px; }
.dg-top th:nth-child(1) { width: 29px; } .dg-top th:nth-child(2) { width: 42px; }
.dg-top th:nth-child(3) { width: 201px; } .dg-top th:nth-child(4) { width: 48px; }
.dg-top th:nth-child(5) { width: 57px; } .dg-top th:nth-child(6) { width: 40px; }
.dg-top th:nth-child(7) { width: 69px; } .dg-top th:nth-child(8) { width: 88px; }
.dg-top th:nth-child(9) { width: 66px; } .dg-top th:nth-child(10) { width: 90px; }
.dg-top th:nth-child(11) { width: 54px; } .dg-top th:nth-child(12) { width: 81px; }
.dg-top th:nth-child(13) { width: 88px; } .dg-top th:nth-child(14) { width: 92px; }
.dg-top th:nth-child(15) { width: 525px; }
.dg-top thead th { height: 17px; }

.dg-main { width: 1082px; }
.dg-main th:nth-child(1) { width: 63px; } .dg-main th:nth-child(2) { width: 28px; }
.dg-main th:nth-child(3) { width: 43px; } .dg-main th:nth-child(4) { width: 48px; }
.dg-main th:nth-child(5) { width: 46px; } .dg-main th:nth-child(6) { width: 45px; }
.dg-main th:nth-child(7) { width: 62px; } .dg-main th:nth-child(8) { width: 26px; }
.dg-main th:nth-child(9) { width: 26px; } .dg-main th:nth-child(10) { width: 22px; }
.dg-main th:nth-child(11) { width: 26px; } .dg-main th:nth-child(12) { width: 23px; }
.dg-main th:nth-child(13) { width: 45px; } .dg-main th:nth-child(14) { width: 49px; }
.dg-main th:nth-child(15) { width: 124px; } .dg-main th:nth-child(16) { width: 68px; }
.dg-main th:nth-child(17) { width: 68px; } .dg-main th:nth-child(18) { width: 47px; }
.dg-main th:nth-child(19) { width: 59px; } .dg-main th:nth-child(20) { width: 46px; }
.dg-main th:nth-child(21) { width: 59px; } .dg-main th:nth-child(22) { width: 59px; }
.dg-main th { height: 18px; }

.dg-right { width: 462px; }
.dg-right th:nth-child(1) { width: 54px; } .dg-right th:nth-child(2) { width: 55px; }
.dg-right th:nth-child(3) { width: 75px; } .dg-right th:nth-child(4) { width: 74px; }
.dg-right th:nth-child(5) { width: 59px; } .dg-right th:nth-child(6) { width: 92px; }
.dg-right th:nth-child(7) { width: 47px; } .dg-right th:nth-child(8) { width: 6px; padding: 0 0 1px 2px; }
.dg-right th { height: 17px; }

/* Bottom panel */
.panel3 { height: 461px; margin-top: 6px; border: 1px solid #666; display: flex; flex-direction: column; }
.toolbar3 { height: 40px; display: flex; align-items: flex-start; padding-left: 3px; }
.ib3 { width: 30px; height: 30px; margin-top: 3px; }
.ic3 { width: 28px; height: 28px; display: block; }
.ib3-b { margin-left: 1px; }
.ib3-c { margin-left: 6px; }
.legends { margin: 3px 0 0 6px; width: 311px; flex: none; }
.legrow { display: flex; }
.legrow2 { margin-top: 4px; }
.leg { height: 13px; line-height: 13px; text-align: center; flex: none; }
.lg-red { background: #f00; color: #fff; } .lg-yel { background: #ff0; } .lg-grn { background: #008000; color: #fff; }
.lg-org { background: #ff9900; } .lg-pur { background: #800080; color: #fff; } .lg-blk { background: #000; color: #fff; }
.lg-pnk { background: #ffc0cb; } .lg-blu { background: #00f; color: #fff; }
.w-l1 { width: 88px; } .w-l2 { width: 123px; margin-left: 2px; } .w-l3 { width: 96px; margin-left: 1px; }
.w-l4 { width: 64px; } .w-l5 { width: 64px; margin-left: 1px; } .w-l6 { width: 54px; margin-left: 3px; }
.w-l7 { width: 52px; margin-left: 4px; } .w-l8 { width: 64px; margin-left: 5px; }
.razd { width: 223px; margin-left: 25px; flex: none; padding-top: 4px; }
.razd-top { display: flex; height: 12px; }
.razd-lab { margin-left: 5px; }
.razd-bot { display: flex; align-items: flex-start; margin-top: 1px; }
.w-r1 { width: 78px; } .w-r2 { width: 82px; }
.razd-do { width: 24px; padding: 2px 0 0 5px; color: #333; }
.ref-small { width: 26px; height: 19px; margin-left: 3px; }
.ic-small { width: 22px; height: 19px; display: block; }
.saldo { margin: 7px 0 0 0; font-size: 19.4px; line-height: 22px; flex: none; white-space: nowrap; }
.tree { width: 37px; height: 30px; margin: 3px 1px 0 auto; }
.ic-tree { width: 34px; height: 27px; display: block; }

.content3 { display: flex; align-items: flex-start; padding-left: 4px; flex: 1; }
.grid-main { width: 1083px; height: 405px; display: flex; flex-direction: column; border-left: 1px solid #777; border-top: 1px solid #a0a0a0; border-bottom: 1px solid #a0a0a0; flex: none; }
.gm-body { flex: 1; background: #ababab; overflow: hidden; }
.hscroll { height: 17px; display: flex; background: #dcdcdc; border-top: 1px solid #a9a9a9; flex: none; }
.sb-btn { width: 17px; flex: none; background: #fff; display: flex; align-items: center; justify-content: center; border: 1px solid #d8d8d8; }
.sb-thumb { background: #dcdcdc; display: flex; align-items: center; justify-content: center; flex: none; }
.th-main { width: 806px; }
.th-right { width: 140px; }
.sb-track { flex: 1; background: #fff; }
.grip { display: block; width: 7px; height: 7px; background: linear-gradient(90deg, #555 1px, transparent 1px) 0 0 / 2px 100%; }
.chev-l, .chev-r, .chev-u, .chev-d { display: block; width: 6px; height: 6px; border-left: 1px solid #666; border-bottom: 1px solid #666; }
.chev-l { transform: rotate(45deg); margin-left: 2px; }
.chev-r { transform: rotate(225deg); margin-right: 2px; }
.chev-u { transform: rotate(135deg); margin-top: 3px; }
.chev-d { transform: rotate(-45deg); margin-bottom: 3px; }
.splitter { width: 15px; height: 405px; font-size: 12px; padding-right: 3px; }

.rightpanel { margin-left: 13px; width: 480px; flex: none; }
.w-cit { width: 480px; height: 20px; margin-top: 1px; }
.grid-right { display: flex; margin-top: 8px; height: 375px; border: 1px solid #a0a0a0; border-width: 1px 0 1px 1px; }
.gr-main { width: 462px; flex: none; display: flex; flex-direction: column; }
.gr-main .dg { flex: none; }
.hs-right { margin-top: 0; }
.vscroll { width: 17px; flex: none; display: flex; flex-direction: column; background: #fff; height: 357px; }
.vs-btn { height: 17px; display: flex; align-items: center; justify-content: center; flex: none; border: 1px solid #d8d8d8; background: #fff; }
.vs-track { flex: 1; background: #fff; }
.vs-thumb { height: 41px; background: #dcdcdc; display: flex; align-items: center; justify-content: center; flex: none; }
.vgrip { display: block; width: 7px; height: 7px; background: linear-gradient(#555 1px, transparent 1px) 0 0 / 100% 2px; }

.status { height: 22px; padding: 5px 0 0 4px; letter-spacing: .1px; }
```
